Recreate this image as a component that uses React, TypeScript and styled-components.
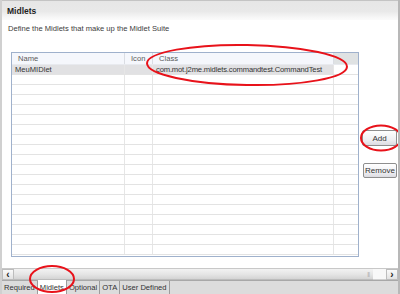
import React from "react";
import styled, { createGlobalStyle } from "styled-components";

const Global = createGlobalStyle`
  html, body { margin: 0; padding: 0; background: #fff; }
  * { box-sizing: border-box; }
`;

const Page = styled.div`
  position: relative;
  width: 400px;
  height: 294px;
  display: flex;
  flex-direction: column;
  font-family: "Liberation Sans", Arial, sans-serif;
  font-size: 7.6px;
  color: #333;
  border-left: 2px solid #d0d0d0;
  border-right: 2px solid #b8b8b8;
  overflow: hidden;
  background: #fff;
`;

const Header = styled.div`
  height: 20px;
  flex: none;
  display: flex;
  align-items: center;
  padding-left: 5px;
  border-top: 1px solid #c4c4c4;
  background: linear-gradient(#e6e6e6 0%, #e9e9e9 55%, #f6f6f6 85%, #fbfbfb 100%);
  font-weight: bold;
  font-size: 8.5px;
  color: #1e1e1e;
`;

const Description = styled.div`
  height: 32px;
  flex: none;
  padding: 4px 0 0 6px;
  color: #3c3c3c;
`;

const Content = styled.div`
  flex: none;
  height: 205px;
  display: flex;
  padding-left: 9px;
`;

const Table = styled.div`
  width: 348px;
  height: 205px;
  border: 1px solid #9fb1cc;
  display: flex;
  flex-direction: column;
  overflow: hidden;
`;

const Row = styled.div<{ $head?: boolean }>`
  display: grid;
  grid-template-columns: 113px 28px 181px 1fr;
  height: ${(p) => (p.$head ? "12px" : "10px")};
  flex: none;
  border-bottom: 1px solid ${(p) => (p.$head ? "#e8eaef" : "#e3e3e3")};
  background: ${(p) => (p.$head ? "#f5f7fc" : "#fff")};
`;

const Cell = styled.div<{ $head?: boolean; $sel?: boolean; $extra?: boolean; $tight?: boolean }>`
  border-right: 1px solid ${(p) => (p.$head ? "#dadde3" : "#e6e6e6")};
  background: ${(p) =>
    p.$head && p.$extra ? "#dfe2e3" : p.$sel ? "#e1e1e3" : "transparent"};
  color: ${(p) => (p.$head ? "#5a5a5a" : "#333")};
  padding-left: ${(p) => (p.$head ? "6px" : "3px")};
  line-height: ${(p) => (p.$head ? "12px" : "10px")};
  letter-spacing: ${(p) => (p.$tight ? "-0.15px" : "0")};
  white-space: nowrap;
  overflow: hidden;
  &:last-child { border-right: none; }
`;

const Buttons = styled.div`
  flex: 1;
  display: flex;
  flex-direction: column;
  align-items: flex-end;
  padding: 78px 1px 0 0;
  gap: 17px;
`;

const Button = styled.div<{ $w: number; $h: number }>`
  width: ${(p) => p.$w}px;
  height: ${(p) => p.$h}px;
  border: 1px solid #8e8e8e;
  border-radius: 2px;
  background: linear-gradient(#ffffff, #f0f0f3 60%, #dcdce2);
  display: flex;
  align-items: center;
  justify-content: center;
  color: #333;
  font-size: 8px;
`;

const Gap = styled.div`
  height: 11px;
  flex: none;
`;

const Scrollbar = styled.div`
  height: 12px;
  flex: none;
  display: flex;
  border-top: 1px solid #c8c8c8;
  background: #e8e8e8;
`;

const Arrow = styled.div`
  width: 12px;
  display: flex;
  align-items: center;
  justify-content: center;
  background: linear-gradient(#fafafa, #e2e2e2);
  border: 1px solid #bdbdbd;
  font-weight: bold;
  font-size: 10px;
  color: #222;
`;

const Thumb = styled.div`
  flex: 1;
  background: linear-gradient(#f2f2f2, #e6e6e6 50%, #d4d4d4);
  border-bottom: 1px solid #bcbcbc;
  display: flex;
  justify-content: flex-end;
  align-items: center;
  padding-right: 4px;
  color: #b0b0b0;
  font-size: 6px;
  letter-spacing: -1px;
`;

const Track = styled.div`
  width: 13px;
  background: #f8f8f8;
  border-bottom: 1px solid #d0d0d0;
`;

const Tabs = styled.div`
  flex: 1;
  display: flex;
  align-items: stretch;
  background: #dcdcdc;
  border-top: 1px solid #a8a8a8;
`;

const Tab = styled.div<{ $active?: boolean }>`
  padding: 0 2px;
  display: flex;
  align-items: center;
  background: ${(p) => (p.$active ? "#fff" : "#dcdcdc")};
  border-right: 1px solid #9c9c9c;
  color: #333;
  margin-top: ${(p) => (p.$active ? "-1px" : "0")};
`;

const Overlay = styled.svg`
  position: absolute;
  left: 0;
  top: 0;
  pointer-events: none;
`;

const rows = Array.from({ length: 18 });

export default function App() {
  return (
    <>
      <Global />
      <Page>
        <Header>Midlets</Header>
        <Description>Define the Midlets that make up the Midlet Suite</Description>
        <Content>
          <Table>
            <Row $head>
              <Cell $head>Name</Cell>
              <Cell $head>Icon</Cell>
              <Cell $head>Class</Cell>
              <Cell $head $extra />
            </Row>
            <Row>
              <Cell $sel>MeuMIDlet</Cell>
              <Cell $sel />
              <Cell $sel $tight>com.mot.j2me.midlets.commandtest.CommandTest</Cell>
              <Cell />
            </Row>
            {rows.map((_, i) => (
              <Row key={i}>
                <Cell />
                <Cell />
                <Cell />
                <Cell />
              </Row>
            ))}
          </Table>
          <Buttons>
            <Button $w={35} $h={16}>Add</Button>
            <Button $w={34} $h={15}>Remove</Button>
          </Buttons>
        </Content>
        <Gap />
        <Scrollbar>
          <Arrow>&lsaquo;</Arrow>
          <Thumb>|||</Thumb>
          <Track />
          <Arrow>&rsaquo;</Arrow>
        </Scrollbar>
        <Tabs>
          <Tab>Required</Tab>
          <Tab $active>Midlets</Tab>
          <Tab>Optional</Tab>
          <Tab>OTA</Tab>
          <Tab>User Defined</Tab>
        </Tabs>
        <Overlay width="400" height="294" viewBox="0 0 400 294">
          <g fill="none" stroke="#e8121a" strokeWidth="2">
            <ellipse cx="245" cy="65" rx="100" ry="20" transform="rotate(1 245 65)" />
            <ellipse cx="379" cy="138" rx="20" ry="12.5" />
            <ellipse cx="50" cy="279" rx="22" ry="13" />
          </g>
        </Overlay>
      </Page>
    </>
  );
}
